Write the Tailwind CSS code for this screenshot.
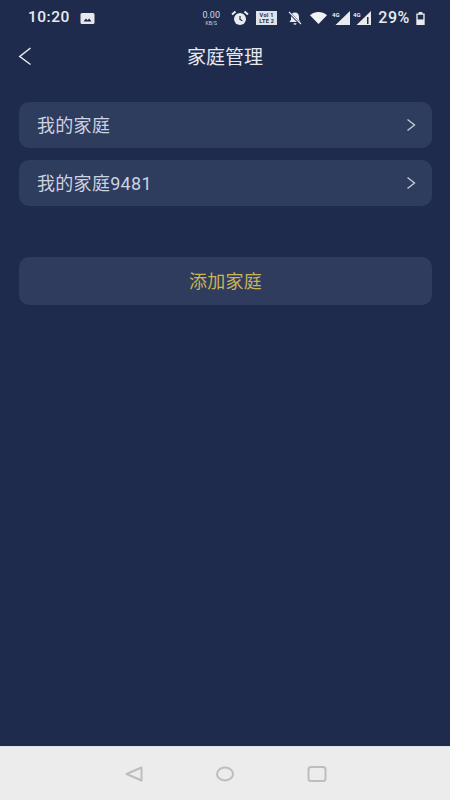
<!DOCTYPE html>
<html>
<head>
<meta charset="utf-8">
<script src="https://cdn.jsdelivr.net/npm/@tailwindcss/browser@4"></script>
</head>
<body class="m-0">
<div class="w-[450px] h-[800px] flex flex-col bg-[#1f2b4d] overflow-hidden font-['Roboto','Noto_Sans_CJK_SC',sans-serif]">
  <div class="h-[36px] flex items-center pl-[28px] pr-[24px] text-[#e9ebf0] shrink-0">
    <span class="text-[15.5px] font-medium tracking-[0.5px] w-[42px]">10:20</span>
    <svg class="ml-[10px]" width="15" height="11" viewBox="0 0 14 11"><rect width="14" height="11" rx="1.500" fill="#e6e8ee"/><path d="M3 8.500 5.500 5.500 7 7.200 8.700 5.500 11 8.500Z" fill="#1f2b4d"/></svg>
    <div class="ml-auto flex items-center">
      <div class="flex flex-col items-center leading-none mr-[10px] w-[20px] text-[#d5d8e0]">
        <span class="text-[9px] leading-[9px]">0.00</span>
        <span class="text-[5px] leading-[6px]">KB/S</span>
      </div>
      <svg width="18" height="16" viewBox="0 0 18 16" class="mr-[7px]"><circle cx="9" cy="9" r="6" fill="#e9ebf0"/><path d="M9 6v3.500l2.400 1.300" stroke="#1f2b4d" stroke-width="1.200" fill="none"/><path d="M1 4.500 4.500 1.500M17 4.500 13.500 1.500" stroke="#e9ebf0" stroke-width="2"/></svg>
      <div class="w-[21px] h-[14px] bg-[#dfe2e9] mr-[10px] text-[#1f2b4d] text-[5.5px] font-bold leading-[6px] flex flex-col justify-center items-center tracking-[0.3px]"><span>VoI 1</span><span>LTE 2</span></div>
      <svg width="16" height="15" viewBox="0 0 16 15" class="mr-[7px]"><path d="M8 1.500c-2.600 0-4 2-4 4.300v3L2.500 11h11L12 8.800v-3c0-2.300-1.400-4.300-4-4.300Z" fill="#e9ebf0"/><path d="M6.500 12.300h3a1.500 1.500 0 0 1-3 0Z" fill="#e9ebf0"/><path d="M2 1.500 14 13.500" stroke="#1f2b4d" stroke-width="2.400"/><path d="M2 1 14 13" stroke="#e9ebf0" stroke-width="1.100"/></svg>
      <svg width="17" height="12" viewBox="0 0 17 12" class="mr-[5px]"><path d="M0 3.200C5-1 12-1 17 3.200L8.500 12Z" fill="#f2f3f6"/></svg>
      <svg width="18" height="15" viewBox="0 0 18 15" class="mr-[3px]"><path d="M18 0v14H3.500Z" fill="#e9ebf0"/><text x="0" y="5.500" font-size="6" font-weight="700" fill="#e9ebf0">4G</text></svg>
      <svg width="18" height="15" viewBox="0 0 18 15" class="mr-[7px]"><path d="M18 0v14H3.500Z" fill="#e9ebf0"/><path d="M14 6h1.500v7H14Z" fill="#1f2b4d"/><text x="0" y="5.500" font-size="6" font-weight="700" fill="#e9ebf0">4G</text></svg>
      <span class="text-[16px] font-medium tracking-[0.6px] mr-[5px]">29%</span>
      <svg width="11" height="13" viewBox="0 0 11 14"><path d="M3.500 0h4v1.500h2.500v12.500H1V1.500h2.500Z" fill="#e9ebf0"/><rect x="2.500" y="3" width="6" height="5" fill="#1f2b4d"/></svg>
    </div>
  </div>
  <div class="h-[42px] relative flex items-center justify-center shrink-0">
    <svg class="absolute left-[18px] top-[11px]" width="14" height="19" viewBox="0 0 14 19"><path d="M12.500 1 1.800 9.500l10.700 8" fill="none" stroke="#e9ebf0" stroke-width="1.500"/></svg>
    <span class="text-[19px] leading-[24px] pt-[2px] text-[#e6e8ee]">家庭管理</span>
  </div>
  <div class="flex flex-col pl-[19px] pr-[18px] pt-[24px]">
    <div class="h-[46px] flex items-center justify-between pl-[18px] pr-[16px] rounded-[10px] bg-[#2e3c5e]">
      <span class="text-[18px] leading-[24px] pt-[2px] text-[#ccd2e0] tracking-[0.3px]">我的家庭</span>
      <svg width="10" height="14" viewBox="0 0 10 14"><path d="M1.500 1.500 8.500 7l-7 5.500" fill="none" stroke="#c3c9d6" stroke-width="1.400"/></svg>
    </div>
    <div class="h-[46px] mt-[12px] flex items-center justify-between pl-[18px] pr-[16px] rounded-[10px] bg-[#2e3c5e]">
      <span class="text-[18px] leading-[24px] pt-[2px] text-[#ccd2e0] tracking-[0.3px]">我的家庭9481</span>
      <svg width="10" height="14" viewBox="0 0 10 14"><path d="M1.500 1.500 8.500 7l-7 5.500" fill="none" stroke="#c3c9d6" stroke-width="1.400"/></svg>
    </div>
    <div class="h-[48px] mt-[51px] flex items-center justify-center rounded-[10px] bg-[#303c5e]">
      <span class="text-[18px] leading-[24px] pt-[2px] text-[#c9b355] tracking-[0.3px]">添加家庭</span>
    </div>
  </div>
  <div class="mt-auto h-[54px] bg-[#ececec] border-t border-[#dfe1e6] relative shrink-0">
    <svg class="absolute left-[125px] top-[19px]" width="18" height="16" viewBox="0 0 18 16"><path d="M16.500 1.500v13L1.500 8Z" fill="none" stroke="#bdbdbd" stroke-width="2" stroke-linejoin="round"/></svg>
    <svg class="absolute left-[216px] top-[19px]" width="18" height="16" viewBox="0 0 18 16"><ellipse cx="9" cy="8" rx="8" ry="6.500" fill="none" stroke="#bdbdbd" stroke-width="2"/></svg>
    <svg class="absolute left-[307px] top-[19px]" width="20" height="16" viewBox="0 0 20 16"><rect x="1.500" y="1" width="17" height="14" rx="2.500" fill="none" stroke="#bdbdbd" stroke-width="2"/></svg>
  </div>
</div>
</body>
</html>
